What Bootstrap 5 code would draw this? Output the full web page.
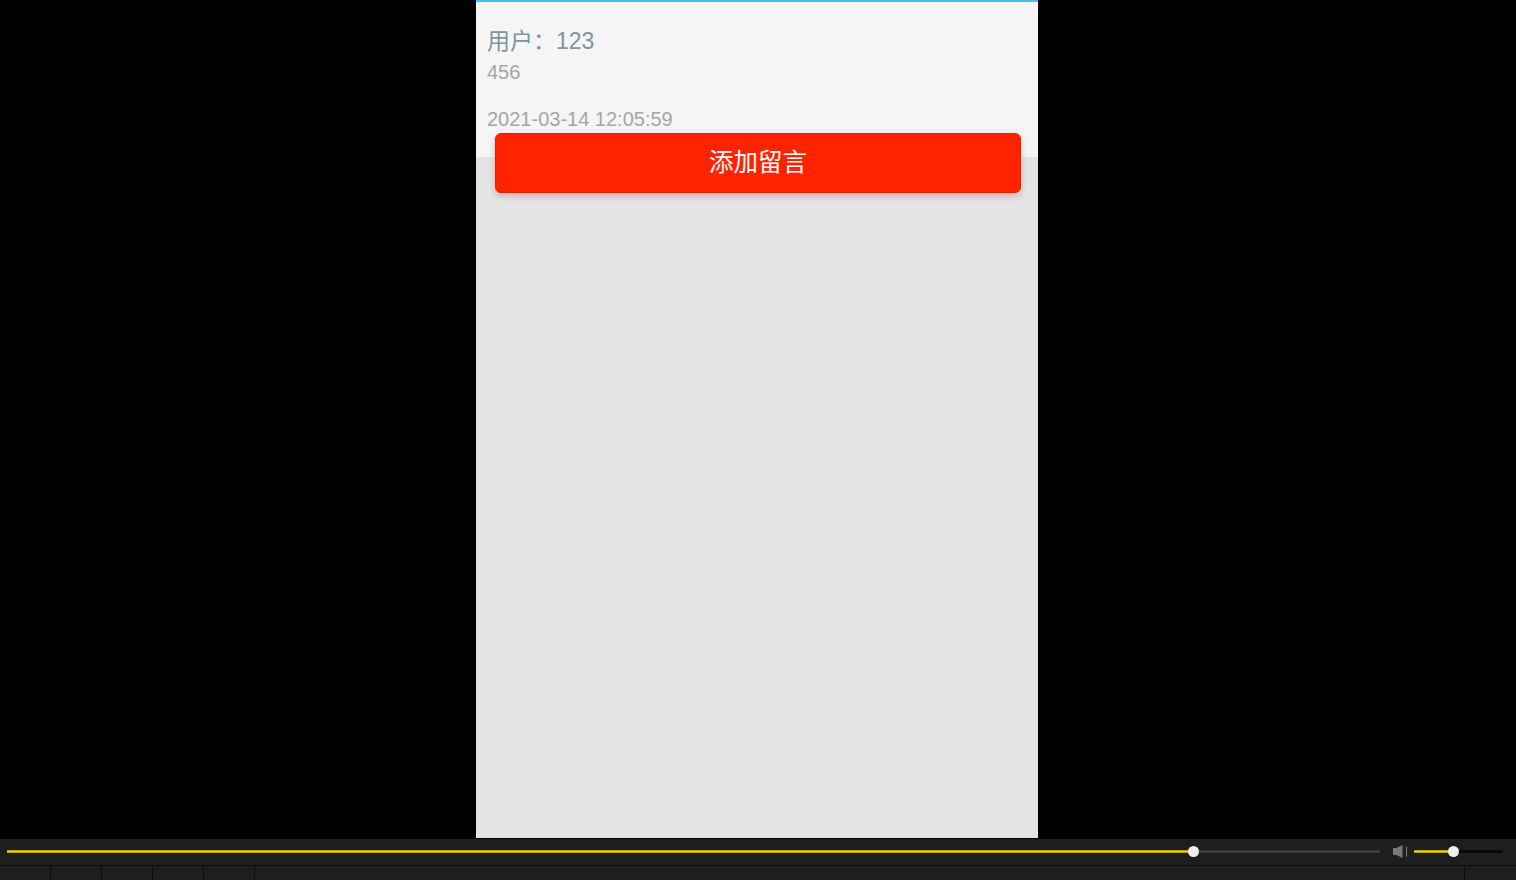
<!DOCTYPE html>
<html lang="zh">
<head>
<meta charset="utf-8">
<title>添加留言</title>
<link rel="stylesheet" href="https://cdn.jsdelivr.net/npm/bootstrap@5.3.0/dist/css/bootstrap.min.css">
<style>
html,body{height:880px;overflow:hidden;background:#000;font-family:"Liberation Sans","Noto Sans CJK SC",sans-serif}
.shell{height:880px}
.stage{height:839px;padding-right:2px}
.phone{width:562px;height:838px;background:#e4e4e4}
.msg-card{height:157px;background:#f5f5f5;border-top:2px solid #3fc3ee;padding:24px 11px 0 11px}
.msg-user{font-size:23px;line-height:30px;color:#82929e}
.msg-body{font-size:20px;line-height:26px;color:#a5a5a5;margin-top:3px}
.msg-time{font-size:20px;line-height:26px;color:#a5a5a5;margin-top:21px}
.add-btn{display:block;width:526px;height:60px;margin:-24px 0 0 19px;padding:0;font-size:24.5px;line-height:58px;color:#fff;background:#ff2300;border:1px solid #e62000;border-radius:6px;box-shadow:0 3px 6px rgba(160,60,50,.3)}
.add-btn:hover{color:#fff;background:#ff2300;border-color:#e62000}
.ctl-bar{height:26px;background:#1e1e1e;padding:0 13px 1px 7px}
.seek{flex:1;height:3px;background:linear-gradient(#2a2a2a,#444 50%,#2a2a2a)}
.seek-on{width:1186px;height:3px;background:linear-gradient(#a08c00,#eed400 50%,#a08c00)}
.knob{width:11px;height:11px;border-radius:50%;background:#eee;flex:none}
.seek-knob{margin-left:-5px;margin-top:-4px}
.vol-icon{margin:0 6px 0 13px}
.vol{width:89px;height:3px;background:#080808}
.vol-on{width:39px;height:3px;background:linear-gradient(#a08c00,#eed400 50%,#a08c00)}
.tabs-bar{height:15px;background:#1e1e1e;border-top:1px solid #0c0c0c}
.tab-cell{width:51px;border-right:1px solid #0c0c0c}
.tab-last{width:52px;border-left:1px solid #0c0c0c}
</style>
</head>
<body>
<div class="shell d-flex flex-column">
  <div class="stage d-flex justify-content-center">
    <div class="phone">
      <div class="msg-card">
        <div class="msg-user">用户：123</div>
        <div class="msg-body">456</div>
        <div class="msg-time">2021-03-14 12:05:59</div>
      </div>
      <button type="button" class="btn add-btn">添加留言</button>
    </div>
  </div>
  <div class="ctl-bar d-flex align-items-center">
    <div class="seek d-flex">
      <div class="seek-on"></div>
      <div class="knob seek-knob"></div>
    </div>
    <svg class="vol-icon" width="15" height="13" viewBox="0 0 15 13" aria-hidden="true">
      <path d="M0 3h3.5L9.5 0v13L3.5 10H0z" fill="#787878"/>
      <path d="M13.5 1.5v10" stroke="#787878" stroke-width="1"/>
    </svg>
    <div class="vol d-flex">
      <div class="vol-on"></div>
      <div class="knob seek-knob"></div>
    </div>
  </div>
  <div class="tabs-bar d-flex flex-grow-1">
    <div class="tab-cell"></div>
    <div class="tab-cell"></div>
    <div class="tab-cell"></div>
    <div class="tab-cell"></div>
    <div class="tab-cell"></div>
    <div class="flex-grow-1"></div>
    <div class="tab-last"></div>
  </div>
</div>
<script src="https://cdn.jsdelivr.net/npm/bootstrap@5.3.0/dist/js/bootstrap.bundle.min.js"></script>
</body>
</html>
